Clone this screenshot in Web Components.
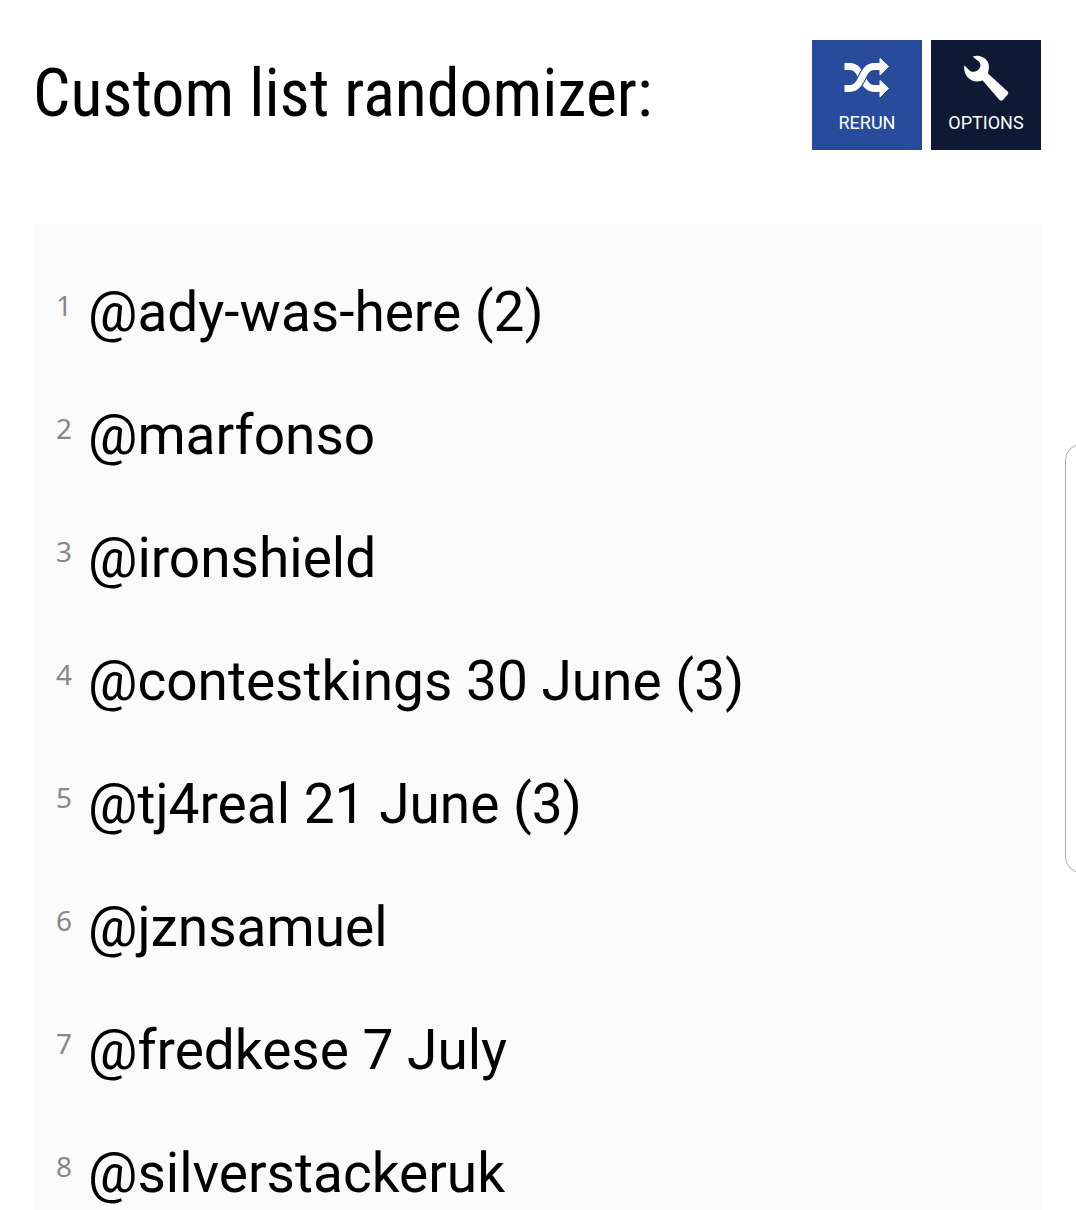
<!DOCTYPE html>
<html lang="en">
<head>
<meta charset="utf-8">
<meta name="viewport" content="width=device-width, initial-scale=1">
<title>Custom list randomizer</title>
<style>
  body {
    margin: 0;
    height: 100vh;
    overflow: hidden;
    background: #fff;
    color: #000;
    font-family: Roboto, "Noto Sans", sans-serif;
  }
</style>
</head>
<body>
<randomizer-page>
  <page-header slot="header">
    Custom list randomizer:
    <tool-button slot="actions" tone="blue" icon="shuffle">RERUN</tool-button>
    <tool-button slot="actions" tone="navy" icon="wrench">OPTIONS</tool-button>
  </page-header>
  <result-list>
    <result-item rank="1">@ady-was-here (2)</result-item>
    <result-item rank="2">@marfonso</result-item>
    <result-item rank="3">@ironshield</result-item>
    <result-item rank="4">@contestkings 30 June (3)</result-item>
    <result-item rank="5">@tj4real 21 June (3)</result-item>
    <result-item rank="6">@jznsamuel</result-item>
    <result-item rank="7">@fredkese 7 July</result-item>
    <result-item rank="8">@silverstackeruk</result-item>
  </result-list>
</randomizer-page>
<edge-handle></edge-handle>

<script>
// Page shell: header on top, results below
class RandomizerPage extends HTMLElement {
  constructor() {
    super();
    this.attachShadow({ mode: 'open' });
    this.shadowRoot.innerHTML = `
      <style>
        :host { display: block; padding: 40px 35px 0 33px; }
        main { margin-top: 74px; }
      </style>
      <slot name="header"></slot>
      <main><slot></slot></main>
    `;
  }
}

class PageHeader extends HTMLElement {
  constructor() {
    super();
    this.attachShadow({ mode: 'open' });
    this.shadowRoot.innerHTML = `
      <style>
        :host { display: block; }
        header {
          display: flex;
          align-items: flex-start;
          justify-content: space-between;
          gap: 24px;
        }
        h1 {
          margin: 0;
          font: 400 66px/108px "Roboto Condensed", "Liberation Sans Narrow", Roboto, sans-serif;
          white-space: nowrap;
        }
        nav { display: flex; gap: 9px; }
      </style>
      <header>
        <h1><slot></slot></h1>
        <nav><slot name="actions"></slot></nav>
      </header>
    `;
  }
}

// Square button with an icon above its label
class ToolButton extends HTMLElement {
  constructor() {
    super();
    this.attachShadow({ mode: 'open' });
  }

  connectedCallback() {
    const colors = {
      blue: '#284b9b',
      navy: '#0e1a35',
    };
    const icons = {
      shuffle: `
        <path d="M.5 11.500H6C19 11.500 17 33.500 30 33.500H37" fill="none" stroke="#fff" stroke-width="6.800"/>
        <path d="M6 33.500C19 33.500 17 11.500 30 11.500" fill="none" stroke="${colors.blue}" stroke-width="9"/>
        <path d="M.5 33.500H6C19 33.500 17 11.500 30 11.500H37" fill="none" stroke="#fff" stroke-width="6.800"/>
        <path d="M36 3.500L44.500 11.500L36 20ZM36 25.500L44.500 33.500L36 42Z" fill="#fff" stroke="#fff" stroke-linejoin="round"/>`,
      wrench: `
        <path fill="#fff" d="M9.700 1.700C12 .8 14.500 .6 17 1.200C21.500 2.300 25 5.500 25.700 9.500C26.200 12.500 25.700 15.500 25 18.500L44.600 36.500C45.500 37.500 45.500 38.300 44.700 39.500L40 45C39 46 37.500 46 36.500 45L19.700 25.500C17 26.400 13.500 26.800 10.300 26C4.500 24.200 .3 18 1.300 10.300L6.500 15.500C8 16.900 10 17 12 16.500C15 15.700 17.400 13.500 17.500 10.500C17.500 8.500 16.500 7 15.300 6Z"/>`,
    };
    this.shadowRoot.innerHTML = `
      <style>
        :host { display: block; }
        button {
          display: flex;
          flex-direction: column;
          align-items: center;
          gap: 10px;
          width: 110px;
          height: 110px;
          margin: 0;
          padding: 15px 0 0;
          border: 0;
          background: ${colors[this.getAttribute('tone')]};
          color: #fff;
          font: 400 18px/24px Roboto, sans-serif;
          cursor: pointer;
        }
        svg { display: block; width: 46px; height: 46px; }
      </style>
      <button type="button">
        <svg viewBox="0 0 46 46" aria-hidden="true">${icons[this.getAttribute('icon')]}</svg>
        <span><slot></slot></span>
      </button>
    `;
  }
}

class ResultList extends HTMLElement {
  constructor() {
    super();
    this.attachShadow({ mode: 'open' });
    this.shadowRoot.innerHTML = `
      <style>
        :host { display: block; background: #fafafa; padding: 27px 23px; }
      </style>
      <div role="list"><slot></slot></div>
    `;
  }
}

class ResultItem extends HTMLElement {
  constructor() {
    super();
    this.attachShadow({ mode: 'open' });
  }

  connectedCallback() {
    this.setAttribute('role', 'listitem');
    this.shadowRoot.innerHTML = `
      <style>
        :host {
          display: flex;
          align-items: flex-start;
          gap: 15px;
          font-size: 55px;
          line-height: 123px;
        }
        .rank {
          flex: none;
          min-width: 17px;
          color: #888;
          font: 400 28px/108px "Noto Sans", sans-serif;
        }
      </style>
      <span class="rank">${this.getAttribute('rank')}</span>
      <span><slot></slot></span>
    `;
  }
}

// Outline of the side panel tab, sits over the right edge of the window
class EdgeHandle extends HTMLElement {
  constructor() {
    super();
    this.attachShadow({ mode: 'open' });
    this.shadowRoot.innerHTML = `
      <style>
        :host {
          box-sizing: border-box;
          display: block;
          position: fixed;
          top: 444px;
          right: 0;
          width: 11px;
          height: 429px;
          overflow: hidden;
        }
        div {
          box-sizing: border-box;
          width: 40px;
          height: 100%;
          border: 1px solid #aaa;
          border-radius: 16px;
        }
      </style>
      <div></div>
    `;
  }
}

customElements.define('randomizer-page', RandomizerPage);
customElements.define('page-header', PageHeader);
customElements.define('tool-button', ToolButton);
customElements.define('result-list', ResultList);
customElements.define('result-item', ResultItem);
customElements.define('edge-handle', EdgeHandle);
</script>
</body>
</html>
